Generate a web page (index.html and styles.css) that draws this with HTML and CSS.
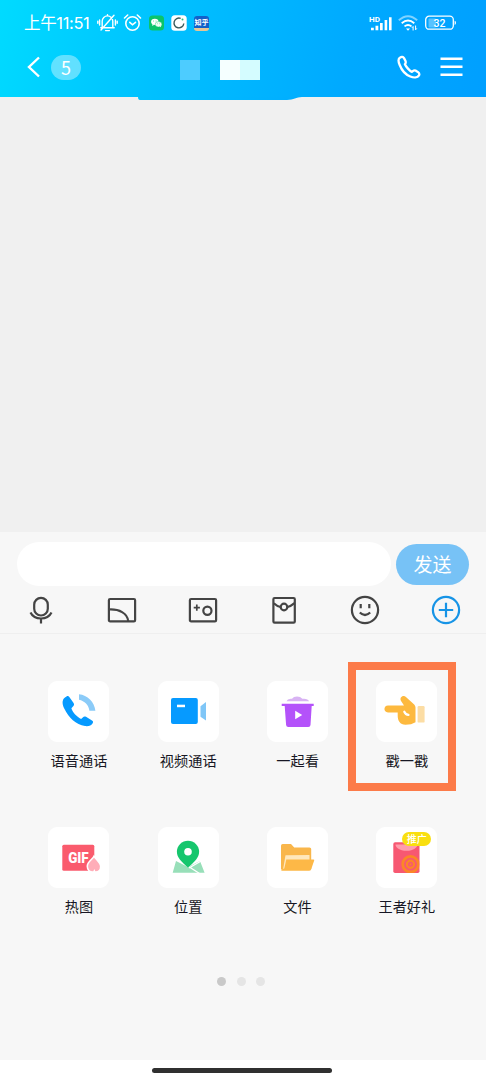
FILE: index.html
```html
<!DOCTYPE html>
<html lang="zh-CN">
<head>
<meta charset="utf-8">
<title>聊天</title>
<link rel="stylesheet" href="styles.css">
</head>
<body>
<div class="phone">
  <header class="header">
    <div class="status">
      <span class="time">上午11:51</span>
      <svg class="st-bell" width="21" height="20" viewBox="0 0 21 20" fill="none" stroke="#fff" stroke-width="1.4" stroke-linecap="round"><path d="M5.200 14.500V8.200a5.300 5.300 0 0 1 10.600 0v6.300M3.800 14.700h13.400M8.600 17.600h3.800M10.500 2.700V1.700M17 2.200 4 17M2.600 7v5M.8 8.300v2M18.400 7v5M20.200 8.300v2"/></svg>
      <svg class="st-alarm" width="19" height="20" viewBox="0 0 19 20" fill="none" stroke="#fff" stroke-width="1.600" stroke-linecap="round"><circle cx="9.500" cy="10.500" r="6.700"/><path d="M1.500 5 4.700 2M17.500 5l-3.200-3M6.800 9.300l2.700 2.500 3-2.500"/></svg>
      <svg class="st-wechat" width="15" height="16" viewBox="0 0 15 16"><rect y=".5" width="15" height="15" rx="3.500" fill="#0bc46a"/><ellipse cx="5.800" cy="6.800" rx="3.700" ry="3.100" fill="#fff"/><ellipse cx="9.500" cy="9.300" rx="3.300" ry="2.700" fill="#f1fff6" stroke="#0bc46a" stroke-width=".4"/><path d="M3.500 9 3.200 10.900l2-1.200M11 11.200l1 1.100.1-1.800" fill="#fff"/><g fill="#0bc46a"><circle cx="4.600" cy="6" r=".45"/><circle cx="7" cy="6" r=".45"/><circle cx="8.500" cy="8.800" r=".4"/><circle cx="10.600" cy="8.800" r=".4"/></g></svg>
      <svg class="st-sync" width="16" height="16" viewBox="0 0 16 16"><rect x=".3" y=".3" width="15.400" height="15.400" rx="3.500" fill="#fff"/><path d="M9.700 3.400A4.900 4.900 0 1 0 12.800 8.500" fill="none" stroke="#3b5a5b" stroke-width="1.400"/><circle cx="11.500" cy="4.500" r="1" fill="#2bbd7c"/></svg>
      <span class="st-zhihu">知乎</span>
      <svg class="st-signal" width="24" height="18" viewBox="0 0 24 18" fill="#fff"><path d="M2 13.800h2.800v2.500H2zM6.500 11.800h2.800v4.500H6.500zM11 9h2.700v7.300H11zM15.600 6h2.600v10.300h-2.600zM20 3.200h2.600v13.100H20z"/><text x="0" y="7.600" class="hd" textLength="11" lengthAdjust="spacingAndGlyphs">HD</text></svg>
      <svg class="st-wifi" width="20" height="17" viewBox="0 0 20 17" fill="none" stroke="#fff" stroke-width="1.800"><path d="M.8 5.300Q10-2.800 19.200 5.300" opacity=".5"/><path d="M3.700 8.300Q10 2.800 16.300 8.300M6.500 11.400Q10 8.600 13.500 11.400"/><path d="M8 13.500h4l-2 2.200z" fill="#fff" stroke="none"/><path d="M15.100 15.500v-4l-1.200 1.300M17.600 10.500v4.300l1.200-1.400" stroke-width="1"/></svg>
      <svg class="st-battery" width="32" height="16" viewBox="0 0 32 16"><rect x="3.500" y="3.500" width="7.500" height="9" rx="1" fill="#fff" opacity=".35"/><rect x=".7" y="1.200" width="27.600" height="13" rx="3.500" fill="none" stroke="#fff" stroke-width="1.300"/><path d="M29.600 5.800c1.800.3 1.800 3.800 0 4.100z" fill="#fff"/><text x="14.500" y="11.600" text-anchor="middle" class="bat">32</text></svg>
    </div>
    <nav class="nav">
      <svg class="back" width="14" height="22" viewBox="0 0 14 22" fill="none" stroke="#fff" stroke-width="2.400"><path d="M12 1.500 2 11l10 9.500"/></svg>
      <span class="count">5</span>
      <span class="mask mask-a"></span>
      <span class="mask mask-b"></span>
      <svg class="call" width="24" height="24" viewBox="0 0 24 24" fill="none" stroke="#fff" stroke-width="2.300" stroke-linejoin="round"><path d="M3.200 2.500C1.300 3.500 1.300 6.800 2.700 10c1.800 4.700 5.600 9.500 10.600 11.500 3.300 1.400 7.300 1.300 8.700-1.100.8-1.500.2-2.500-1.200-3.500l-2.300-1.300c-1.500-.8-2.500.4-3.600 1.200-2.200-.8-6-5.100-7-7.500.8-1 1.200-2 .5-3.500L7 3.100C6.100 1.700 4.500 1.600 3.200 2.500z"/></svg>
      <svg class="menu" width="23" height="20" viewBox="0 0 23 20" fill="#fff"><path d="M.5.500h22v2.500H.5zM.5 8.500h22v2.500H.5zM.5 16.500h22v2.500H.5z"/></svg>
    </nav>
    <svg class="brush" width="164" height="4" viewBox="0 0 164 4"><defs><linearGradient id="edge"><stop stop-color="#00c2ff"/><stop offset="1" stop-color="#00adff"/></linearGradient></defs><path d="M0 0h164c-6 0-8 3-15 3H2Q0 3 0 0z" fill="url(#edge)"/></svg>
  </header>

  <main class="messages"></main>

  <section class="composer">
    <div class="input-row"><div class="input"></div><div class="send">发送</div></div>
    <div class="tools">
      <svg width="30" height="30" viewBox="0 0 30 30"><rect x="8.200" y="2.900" width="13.600" height="17.600" rx="6.800"/><path d="M4.500 17.500C8.500 25.500 21.500 25.500 25.500 17.500M15 23.500v5"/></svg>
      <svg width="30" height="30" viewBox="0 0 30 30"><rect x="1.900" y="4" width="26.200" height="22.400" rx="1.200"/><path d="M2 14.500C12 14 20.500 18 21.200 26.200"/></svg>
      <svg width="30" height="30" viewBox="0 0 30 30"><rect x="1.900" y="4" width="26.200" height="22.400" rx="1.200"/><circle cx="19.400" cy="15.800" r="4.100"/><path d="M8.800 9.500v6.200M5.700 12.600h6.200" stroke-width="1.700"/></svg>
      <svg width="30" height="30" viewBox="0 0 30 30"><rect x="4.400" y="3" width="21.400" height="24.600" rx="1.200"/><path d="M4.800 8.200Q8 11.200 11.500 12M18.500 12Q22 11.200 25.500 8.200"/><circle cx="15" cy="12" r="3.300"/></svg>
      <svg width="30" height="30" viewBox="0 0 30 30"><circle cx="15" cy="15" r="13.100"/><path d="M10.700 9v4.200M19.300 9v4.200" stroke-width="2.200"/><path d="M9.800 17.500Q15 22.500 20.200 17.500"/></svg>
      <svg class="plus" width="30" height="30" viewBox="0 0 30 30"><circle cx="15" cy="15" r="13.100"/><path d="M15 7.800v14.400M7.800 15h14.400"/></svg>
    </div>
  </section>

  <section class="panel">
    <div class="grid">
      <div class="item">
        <svg class="tile" viewBox="0 0 61 61"><path d="M18.500 15.400C14 17.600 13.500 22 16.500 28c4 8.500 11.500 15.500 20.500 17.100 4 .6 7.300-1.200 8-3.700.2-1-.2-1.500-1-2l-6-3.600c-1.300-.7-2.300-.3-3.200.6l-1.700 1.600c-4.600-2.300-8.600-6.800-9.700-10.700l1.800-2c1-1.100 1.100-2 .4-3.300l-4.300-6c-.8-1.100-1.600-1.200-2.800-.6z" fill="#069aff"/><path d="M31 13.200C39.500 14 46.400 20.600 47.400 29.800h-6C40.800 24 36.500 20 31 18.800z" fill="#8bcbf8"/></svg>
        <span>语音通话</span>
      </div>
      <div class="item">
        <svg class="tile" viewBox="0 0 61 61"><rect x="13" y="17" width="26.800" height="26" rx="2" fill="#069aff"/><rect x="19" y="23.700" width="8" height="2.500" fill="#fff"/><path d="M42.500 25.300 48 21v18.500l-5.500-3.800z" fill="#7fc6f7"/></svg>
        <span>视频通话</span>
      </div>
      <div class="item">
        <svg class="tile" viewBox="0 0 61 61"><path d="M19.500 20.200q1-3 5.500-2.400 1.500-2.300 5-2.300t5.300 2.300q5.500-.6 6.800 2.400z" fill="#d8b3f3"/><path d="M14.700 22.800h32v2.300h-2L43.500 44q-.2 2-2.200 2h-20q-2 0-2.200-2l-1.400-18.900h-3z" fill="#b452fa"/><path d="m28.200 29.800 7 4.200-7 4.200z" fill="#fff"/></svg>
        <span>一起看</span>
      </div>
      <div class="item">
        <svg class="tile" viewBox="0 0 61 61"><path d="M12 24.500h16l-2.800-4.200c-2.400-3.800 2-6.900 5-4.100l8 7.300q1.300 1.300 1.300 3v14.800q-4 2.500-10 2.500c-5.500 0-7.800-4.500-7.800-8.800v-3.600H12c-4.700 0-4.700-6.900 0-6.900z" fill="#fdb93e"/><path d="M28.300 30.700q1.200 2.800 4.200 3.200" fill="none" stroke="#fff" stroke-width="2.200" stroke-linecap="round"/><rect x="41.600" y="25" width="7" height="16.600" rx="1.200" fill="#fcdda4"/></svg>
        <span>戳一戳</span>
      </div>
      <div class="item">
        <svg class="tile" viewBox="0 0 61 61"><rect x="14.300" y="17.700" width="32" height="26" rx="1.500" fill="#fa5b6d"/><text x="20.200" y="35.500" class="gif" textLength="20.500" lengthAdjust="spacingAndGlyphs">GIF</text><path d="M46 29.300c-1.200 3-6.700 5-6.700 10 0 3.700 2.600 5.800 5.700 5.800h2.500c3.200 0 5.200-2.300 5.200-5.600 0-3.700-3.800-6.200-6.700-10.200z" fill="#ffadb8" stroke="#fff" stroke-width="1.600"/><path d="m44.800 45.500 1.500-3.500 1.600 3.500z" fill="#fff"/></svg>
        <span>热图</span>
      </div>
      <div class="item">
        <svg class="tile" viewBox="0 0 61 61"><path d="M18 34 30 40l12-6 4.600 11.700H14.700z" fill="#98dfb9"/><path d="M29 38.500 41.500 46.500M31 41 44 33.500" stroke="#fff" stroke-width="1.400"/><path d="M30 40.500C23.500 35 18.900 30.700 18.900 24.800a11.100 11.100 0 0 1 22.200 0C41.100 30.700 36.500 35 30 40.500z" fill="#16c66d"/><circle cx="30" cy="24.800" r="3.800" fill="#fff"/></svg>
        <span>位置</span>
      </div>
      <div class="item">
        <svg class="tile" viewBox="0 0 61 61"><path d="M14 18.700q0-1.700 1.700-1.700H24l3.200 3.400h15.300q1.700 0 1.700 1.700v20H14z" fill="#f9b64b"/><path d="m18.500 28.200 24-.2v6L16 42.500z" fill="#ffe7bb"/><path d="M19.300 32.500h27.200q1 0 .7 1l-3 8.700q-.5 1.500-2.200 1.500H15.300q-1.300 0-1.300-1.200l3.300-1z" fill="#fdb847"/></svg>
        <span>文件</span>
      </div>
      <div class="item">
        <svg class="tile" viewBox="0 0 61 61"><clipPath id="can"><rect x="17.300" y="15.300" width="26.200" height="30.700" rx="1.800"/></clipPath><g clip-path="url(#can)"><path d="M17 15h27v31.500H17z" fill="#f75872"/><path d="M19.500 17.500h22c0 3-4 6.300-11 6.300s-11-3.300-11-6.300z" fill="#ff9dac"/><g fill="none" stroke="#fb8727"><circle cx="34.500" cy="37.200" r="7.800" stroke-width="2.800"/><circle cx="34.500" cy="37.200" r="3.600" stroke-width="2.200"/></g></g><circle cx="34.500" cy="37.200" r="1" fill="#fb8727"/></svg>
        <b class="promo">推广</b>
        <span>王者好礼</span>
      </div>
    </div>
    <div class="highlight"></div>
    <div class="dots"><i class="on"></i><i></i><i></i></div>
  </section>
  <footer class="gesture"><div class="pill"></div></footer>
</div>
</body>
</html>
```

FILE: styles.css
```css
* { box-sizing: border-box; }
body { margin: 0; font-family: "Noto Sans CJK SC", sans-serif; }
svg { display: block; flex: none; }
.phone { width: 486px; height: 1080px; display: flex; flex-direction: column; background: #fff; overflow: hidden; }

.header { position: relative; height: 97px; flex: none; color: #fff; background: linear-gradient(104deg, #00dbff 0%, #00bfff 36%, #00a9ff 72%, #009fff 100%); }
.status { height: 46px; display: flex; align-items: center; padding: 0 29px 0 24px; }
.time { width: 72px; font-family: Inter, "Noto Sans CJK SC", sans-serif; font-size: 16.500px; line-height: 24px; letter-spacing: -.35px; white-space: nowrap; }
.st-bell { margin-left: 1px; }
.st-alarm { margin-left: 5px; }
.st-wechat { margin-left: 7px; }
.st-sync { margin-left: 7px; }
.st-zhihu { margin-left: 7px; width: 15px; height: 15px; border-radius: 3px; background: linear-gradient(#1261c9 78%, #e7c695 78%); font-size: 7px; line-height: 12px; font-weight: 700; text-align: center; white-space: nowrap; }
.st-signal { margin-left: auto; }
.st-wifi { margin-left: 5px; }
.st-battery { margin-left: 7px; }
.hd { font: 700 7px Roboto, sans-serif; }
.bat { font: 500 10.500px Roboto, sans-serif; fill: #fff; }

.nav { display: flex; align-items: center; height: 42px; padding: 0 23px 0 27px; }
.count { margin-left: 10px; width: 30px; height: 25px; border-radius: 13px; background: rgba(255, 255, 255, .38); font-size: 18px; line-height: 24px; text-align: center; }
.mask { width: 20px; height: 20px; margin-top: 6px; }
.mask-a { margin-left: 99px; background: #4dccff; }
.mask-b { margin-left: 20px; width: 40px; background: linear-gradient(90deg, #f5ffff 50%, #d4fcff 50%); }
.call { margin-left: auto; }
.menu { margin-left: 19px; }
.brush { position: absolute; left: 138px; top: 97px; }

.messages { height: 435px; flex: none; background: #f0f0f0; }
.composer { height: 102px; flex: none; background: #f7f7f7; border-bottom: 1px solid #efefef; padding-top: 10px; }
.input-row { display: flex; align-items: center; padding-left: 17px; gap: 5px; }
.input { width: 374px; height: 44px; border-radius: 22px; background: #fff; }
.send { width: 73px; height: 41px; border-radius: 21px; background: #77c2f6; color: #fff; font-size: 19px; line-height: 39px; text-align: center; }
.tools { display: flex; justify-content: space-between; padding: 9px 25.500px 0; }
.tools svg { fill: none; stroke: #444; stroke-width: 2.200; }
.tools .plus { stroke: #1794e6; }

.panel { position: relative; height: 426px; flex: none; background: #f7f7f7; padding-top: 47px; }
.grid { display: grid; grid-template-columns: repeat(4, 109.300px); grid-auto-rows: 146px; margin-left: 24.300px; }
.item { position: relative; display: flex; flex-direction: column; align-items: center; font-size: 14.200px; line-height: 20px; color: #171724; }
.item span { margin-top: 8px; }
.tile { width: 61px; height: 61px; background: #fff; border-radius: 9px; }
.gif { font: 900 14px Roboto, sans-serif; fill: #fff; }
.promo { position: absolute; left: 50px; top: 5px; width: 29px; height: 14px; border-radius: 7px; background: #f9df10; color: #fff; font-size: 10px; line-height: 13px; text-align: center; font-weight: 500; }
.highlight { position: absolute; left: 348px; top: 28px; width: 108px; height: 129px; border: 8px solid #fc7b49; }
.dots { display: flex; justify-content: center; gap: 10.500px; margin-top: 4px; padding-right: 4px; }
.dots i { width: 9px; height: 9px; border-radius: 50%; background: #e5e5e5; }
.dots .on { background: #c9c9c9; }
.gesture { height: 20px; flex: none; display: flex; justify-content: center; align-items: center; background: #fff; padding-right: 3px; }
.pill { width: 180px; height: 5px; border-radius: 3px; background: #303030; }
```
